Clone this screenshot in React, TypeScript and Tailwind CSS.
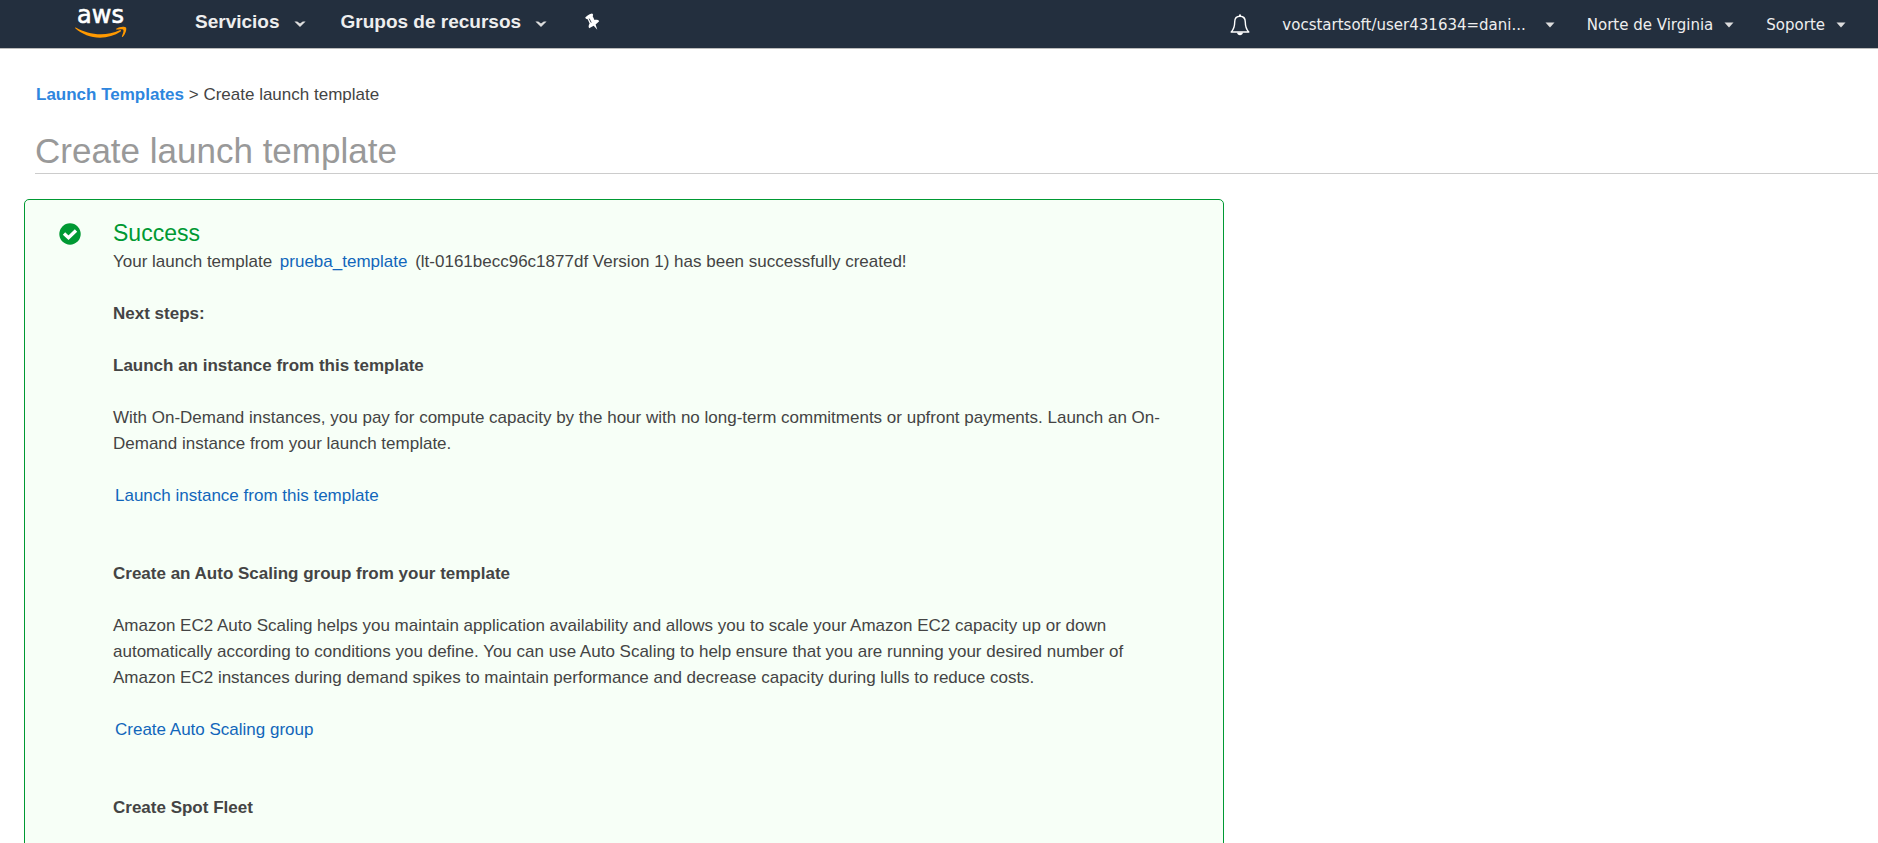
import React from "react";

function Chevron() {
  return (
    <svg className="h-[8px] w-[12px] shrink-0" viewBox="0 0 12 8" aria-hidden="true">
      <path d="M0.4 1.4h2.8L6 3.6l2.8-2.2h2.8L6 7z" fill="#ddd" />
    </svg>
  );
}

function Caret() {
  return (
    <svg className="h-[6px] w-[10px] shrink-0" viewBox="0 0 10 6" aria-hidden="true">
      <path d="M0.5 0.5h9L5 5.5z" fill="#ddd" />
    </svg>
  );
}

function AwsLogo() {
  return (
    <svg className="block h-[40px] w-[52px]" viewBox="0 0 52 40" role="img" aria-label="aws">
      <text x="25.5" y="23" textAnchor="middle" fontFamily="DejaVu Sans, sans-serif" fontSize="24" fill="#fff" stroke="#fff" strokeWidth="0.6">
        aws
      </text>
      <path d="M0.3 28.3C7 34.3 15.500 37.700 25 37.700c7.500 0 14.700-2.200 20.700-6.200 1-.7 0-1.700-1-1.300C39 32.700 32 34.200 26 34.200c-9.500 0-17.500-2.400-24.800-6.500-.8-.4-1.400.1-.9.6z" fill="#f90" />
      <path d="M41.200 28.700c2.600-2.200 8.500-2.600 9.800-1.300.9 1.600-.4 6.600-3.200 9.300-.6.5-1.200.3-.9-.5 1-2.300 2.100-5.200 1.400-6.400-.9-1-4.300-.7-6.500-.2-.8.100-1-.5-.6-.9z" fill="#f90" />
    </svg>
  );
}

function Pin() {
  return (
    <svg className="block h-[18px] w-[15px]" viewBox="0 0 15 18" aria-hidden="true">
      <path d="M0.300 4.600C0.200 3.800 5.800 0.300 7 0.500 8.200 0.900 8.500 2.300 7.600 3.100L9.500 6.900C11.500 6.600 13.700 7 14.200 8.200L10.600 11.400 12.300 16.800 8.700 12.700 4.100 15.300C3.300 14 3.600 12 4.600 10.600L2.700 6.300C1.500 6.400 0.500 5.700 0.300 4.600z" fill="#fff" />
      <path d="M4.200 5.600 6.200 9.600" stroke="#232f3e" strokeWidth="0.900" />
    </svg>
  );
}

function Bell() {
  return (
    <svg className="block h-[22px] w-[20px]" viewBox="0 0 20 22" aria-hidden="true">
      <path d="M10 2.300c-3.500 0-5.300 2.500-5.300 5.700 0 5.500-1 7.500-3.500 10h17.600c-2.500-2.500-3.500-4.500-3.500-10 0-3.200-1.800-5.700-5.300-5.700z" fill="none" stroke="#fff" strokeWidth="1.400" strokeLinejoin="round" />
      <path d="M9 0.500h2v2H9zM7 18.500h6c-.3 1.800-1.400 2.700-3 2.700s-2.700-.9-3-2.700z" fill="#fff" />
    </svg>
  );
}

function NavMenu({ label }: { label: string }) {
  return (
    <button type="button" className="flex items-center gap-[14px] text-[19px] leading-6 font-bold">
      {label}
      <span className="pt-1">
        <Chevron />
      </span>
    </button>
  );
}

function AccountMenu({ label, wide = false }: { label: string; wide?: boolean }) {
  return (
    <button
      type="button"
      className={`flex items-center font-['DejaVu_Sans',Verdana,sans-serif] text-[15px] leading-6 ${wide ? "gap-[19px]" : "gap-[11px]"}`}
    >
      {label}
      <Caret />
    </button>
  );
}

function Step({ title, text, link }: { title: string; text: string; link: string }) {
  return (
    <section className="pb-[52px]">
      <h3 className="mb-[26px] font-bold">{title}</h3>
      <p className="mb-[26px]">{text}</p>
      <a href="#" className="ml-[2px] text-[#1166bb]">
        {link}
      </a>
    </section>
  );
}

export default function App() {
  return (
    <div className="h-screen overflow-hidden bg-white font-['Liberation_Sans',Arial,sans-serif] text-[17px] leading-[26px] text-[#444]">
      <header className="flex h-[49px] items-start justify-between border-b border-[#bbb] bg-[#232f3e] pr-8 pl-[75px] text-[#eee]">
        <nav className="flex items-start" aria-label="Principal">
          <a href="#" className="mr-[68px]">
            <AwsLogo />
          </a>
          <div className="flex items-center gap-[35px] pt-[10px]">
            <NavMenu label="Servicios" />
            <NavMenu label="Grupos de recursos" />
            <button type="button" aria-label="Anclar" className="pl-[3px]">
              <Pin />
            </button>
          </div>
        </nav>
        <div className="flex items-center gap-8 pt-[13px]">
          <button type="button" aria-label="Notificaciones">
            <Bell />
          </button>
          <AccountMenu label="vocstartsoft/user431634=dani..." wide />
          <AccountMenu label="Norte de Virginia" />
          <AccountMenu label="Soporte" />
        </div>
      </header>

      <div className="pt-[33px] pl-[35px]">
        <p className="pl-px">
          <a href="#" className="font-bold text-[#2e86de]">
            Launch Templates
          </a>{" "}
          &gt; Create launch template
        </p>
        <h1 className="mt-[22px] border-b border-[#ccc] pb-px text-[35px] leading-[42px] text-[#999]">Create launch template</h1>
      </div>

      <main className="mt-[25px] ml-6 flex max-w-[1200px] gap-8 rounded-[5px] border border-[#093] bg-[#f7fff7] pt-[19px] pr-12 pl-[34px]">
        <svg className="mt-1 h-[22px] w-[22px] shrink-0" viewBox="0 0 22 22" aria-hidden="true">
          <circle cx="11" cy="11" r="10.700" fill="#093" />
          <path d="M5 10.500 9.500 14.700 17 7.500" fill="none" stroke="#fff" strokeWidth="3.400" />
        </svg>
        <div>
          <h2 className="mb-[2px] text-[23px] leading-[28px] text-[#093]">Success</h2>
          <p className="mb-[26px]">
            Your launch template{" "}
            <a href="#" className="mx-[3px] text-[#1166bb]">
              prueba_template
            </a>{" "}
            (lt-0161becc96c1877df Version 1) has been successfully created!
          </p>
          <p className="mb-[26px] font-bold">Next steps:</p>
          <Step
            title="Launch an instance from this template"
            text="With On-Demand instances, you pay for compute capacity by the hour with no long-term commitments or upfront payments. Launch an On-Demand instance from your launch template."
            link="Launch instance from this template"
          />
          <Step
            title="Create an Auto Scaling group from your template"
            text="Amazon EC2 Auto Scaling helps you maintain application availability and allows you to scale your Amazon EC2 capacity up or down automatically according to conditions you define. You can use Auto Scaling to help ensure that you are running your desired number of Amazon EC2 instances during demand spikes to maintain performance and decrease capacity during lulls to reduce costs."
            link="Create Auto Scaling group"
          />
          <h3 className="pb-[52px] font-bold">Create Spot Fleet</h3>
        </div>
      </main>
    </div>
  );
}
